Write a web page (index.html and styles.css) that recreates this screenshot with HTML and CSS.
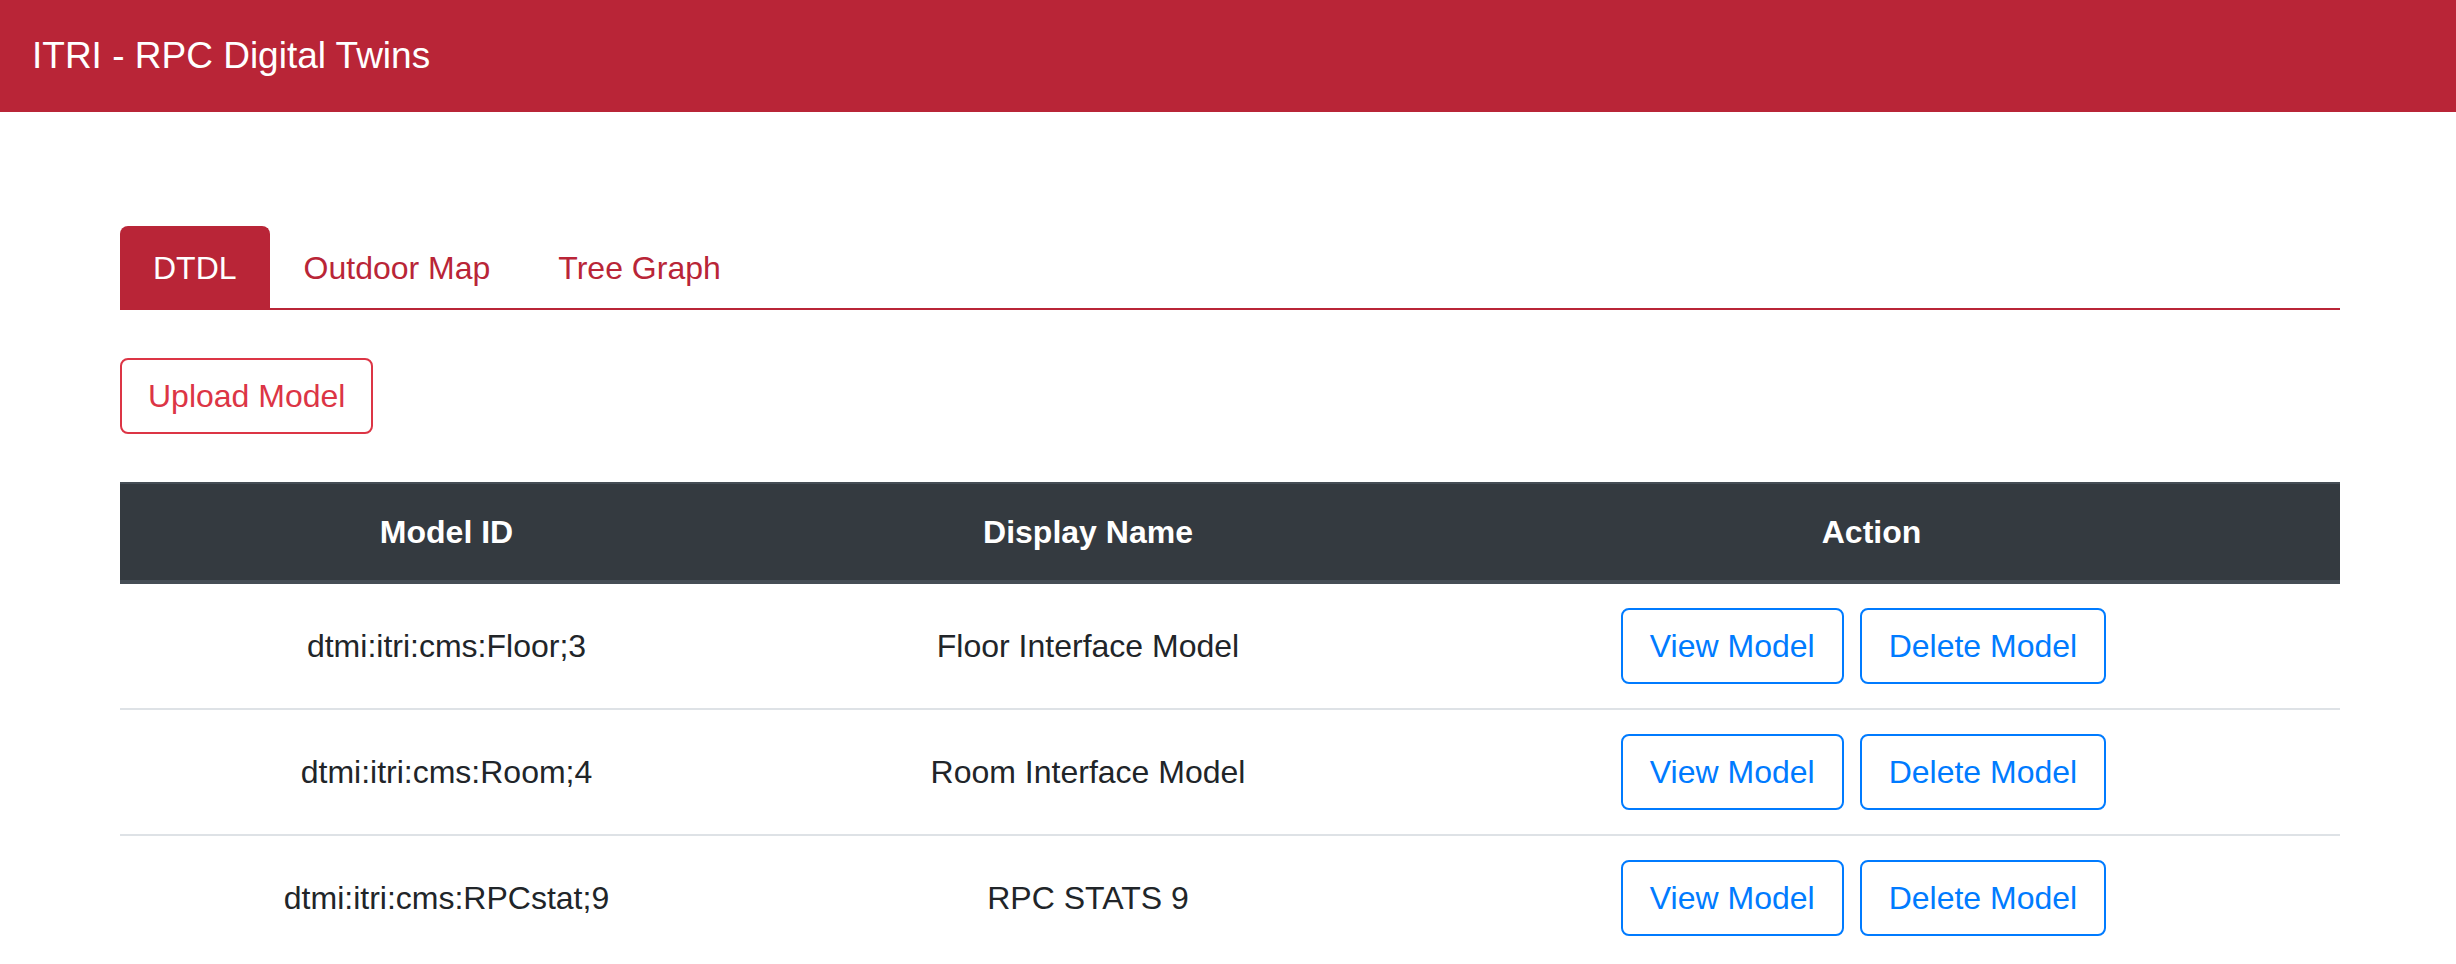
FILE: index.html
```html
<!DOCTYPE html>
<html lang="en">
<head>
<meta charset="utf-8">
<title>ITRI - RPC Digital Twins</title>
<link rel="stylesheet" href="styles.css">
</head>
<body>
<nav class="navbar">
  <span class="brand">ITRI - RPC Digital Twins</span>
</nav>
<main class="container">
  <ul class="tabs">
    <li><a class="tab active" href="#">DTDL</a></li>
    <li><a class="tab" href="#">Outdoor Map</a></li>
    <li><a class="tab" href="#">Tree Graph</a></li>
  </ul>
  <div class="toolbar">
    <button class="btn btn-outline-danger" type="button">Upload Model</button>
  </div>
  <table class="models">
    <colgroup>
      <col class="col-id">
      <col class="col-name">
      <col class="col-action">
    </colgroup>
    <thead>
      <tr>
        <th>Model ID</th>
        <th>Display Name</th>
        <th>Action</th>
      </tr>
    </thead>
    <tbody>
      <tr>
        <td>dtmi:itri:cms:Floor;3</td>
        <td>Floor Interface Model</td>
        <td><div class="actions"><button class="btn btn-outline-primary" type="button">View Model</button><button class="btn btn-outline-primary" type="button">Delete Model</button></div></td>
      </tr>
      <tr>
        <td>dtmi:itri:cms:Room;4</td>
        <td>Room Interface Model</td>
        <td><div class="actions"><button class="btn btn-outline-primary" type="button">View Model</button><button class="btn btn-outline-primary" type="button">Delete Model</button></div></td>
      </tr>
      <tr>
        <td>dtmi:itri:cms:RPCstat;9</td>
        <td>RPC STATS 9</td>
        <td><div class="actions"><button class="btn btn-outline-primary" type="button">View Model</button><button class="btn btn-outline-primary" type="button">Delete Model</button></div></td>
      </tr>
    </tbody>
  </table>
</main>
</body>
</html>
```
FILE: styles.css
```css
* { box-sizing: border-box; }

body {
  margin: 0;
  background: #ffffff;
  color: #212529;
  font-family: "Liberation Sans", Arial, sans-serif;
  font-size: 32px;
  line-height: 48px;
}

.navbar {
  display: flex;
  align-items: center;
  background: #b92537;
  padding: 16px 32px;
}

.brand {
  color: #ffffff;
  font-size: 37px;
  line-height: 60px;
  padding: 10px 0;
}

.container {
  width: 2220px;
  margin-left: 120px;
  padding-top: 114px;
}

.tabs {
  list-style: none;
  margin: 0;
  padding: 0;
  display: flex;
  border-bottom: 2px solid #b92537;
}

.tab {
  display: block;
  padding: 16px 32px;
  border: 2px solid transparent;
  border-bottom: 0;
  border-radius: 8px 8px 0 0;
  color: #b92537;
  text-decoration: none;
  line-height: 48px;
}

.tab.active {
  background: #b92537;
  border-color: #b92537;
  color: #ffffff;
  padding: 16px 31px;
}

.toolbar {
  margin: 48px 0;
  display: flex;
}

.btn {
  font-family: inherit;
  font-size: 32px;
  line-height: 48px;
  padding: 12px 26px;
  border: 2px solid;
  border-radius: 8px;
  background: transparent;
  cursor: pointer;
}

.btn-outline-danger {
  color: #dc3545;
  border-color: #dc3545;
}

.btn-outline-primary {
  color: #007bff;
  border-color: #007bff;
  padding: 12px 27px;
}

.models {
  width: 2220px;
  table-layout: fixed;
  border-collapse: separate;
  border-spacing: 0;
}

.col-id { width: 653px; }
.col-name { width: 630px; }
.col-action { width: 937px; }

.models th {
  background: #343a40;
  color: #ffffff;
  font-weight: 700;
  text-align: center;
  padding: 24px;
  line-height: 48px;
  border-top: 2px solid #454d55;
  border-bottom: 4px solid #454d55;
}

.models td {
  text-align: center;
  vertical-align: middle;
  padding: 24px;
  border-top: 2px solid #dee2e6;
}

.models tbody tr:first-child td {
  border-top: 0;
}

.actions {
  display: flex;
  justify-content: center;
}

.actions .btn {
  margin-right: 16px;
}
```
